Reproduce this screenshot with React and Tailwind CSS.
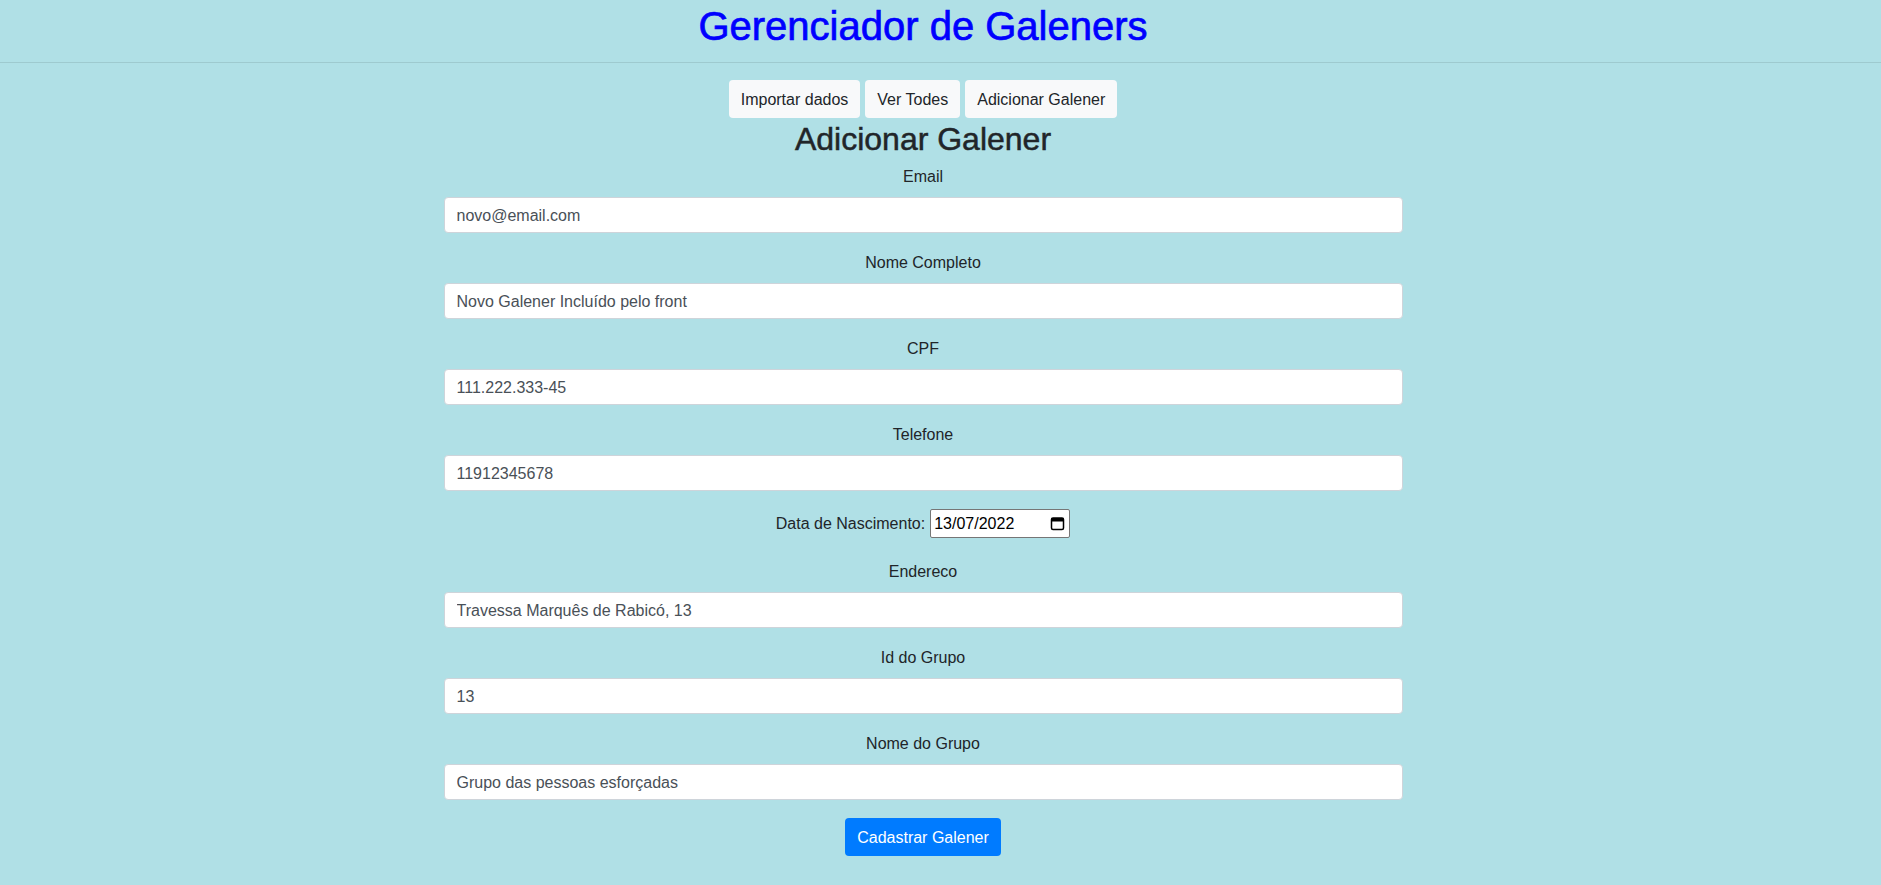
import { useState } from 'react';

const campos = [
  { id: 'email', label: 'Email', valor: 'novo@email.com' },
  { id: 'nome', label: 'Nome Completo', valor: 'Novo Galener Incluído pelo front' },
  { id: 'cpf', label: 'CPF', valor: '111.222.333-45' },
  { id: 'telefone', label: 'Telefone', valor: '11912345678' },
];

const camposGrupo = [
  { id: 'endereco', label: 'Endereco', valor: 'Travessa Marquês de Rabicó, 13' },
  { id: 'idGrupo', label: 'Id do Grupo', valor: '13' },
  { id: 'nomeGrupo', label: 'Nome do Grupo', valor: 'Grupo das pessoas esforçadas' },
];

function Campo({ id, label, valor }) {
  return (
    <div className="mb-[18px]">
      <label htmlFor={id} className="block text-center leading-6 mb-2 text-[#212529]">
        {label}
      </label>
      <input
        id={id}
        defaultValue={valor}
        className="block w-full h-9 pl-3 pr-3 pt-[2px] rounded border border-[#ced4da] bg-white text-[#495057] outline-none"
      />
    </div>
  );
}

function CalendarIcon() {
  return (
    <svg width="15" height="15" viewBox="0 0 15 15" className="shrink-0">
      <rect x="1.5" y="2" width="12" height="11.5" rx="1.5" fill="none" stroke="#000" strokeWidth="1.5" />
      <rect x="1.5" y="2" width="12" height="3.5" fill="#000" />
    </svg>
  );
}

export default function App() {
  const [aba, setAba] = useState('adicionar');

  return (
    <div className="min-h-screen bg-[#b0e0e6] font-['Liberation_Sans',Arial,sans-serif] text-base text-[#212529]">
      <header className="h-[63px] pt-[2px] border-b border-[#9ecacf]">
        <div className="w-[1846px] text-center">
          <h1 className="text-[40px] leading-[48px] text-[#0000ff] [-webkit-text-stroke:0.7px_#0000ff]">
            Gerenciador de Galeners
          </h1>
        </div>
      </header>

      <main className="w-[1846px] flex flex-col items-center pt-[17px]">
        <nav className="flex gap-[5px]">
          {[
            ['importar', 'Importar dados'],
            ['todos', 'Ver Todes'],
            ['adicionar', 'Adicionar Galener'],
          ].map(([chave, texto]) => (
            <button
              key={chave}
              onClick={() => setAba(chave)}
              className="h-[38px] px-3 pt-[2px] rounded bg-[#f8f9fa] text-[#212529] leading-6"
            >
              {texto}
            </button>
          ))}
        </nav>

        <h2 className="text-[32px] leading-[40px] pt-[1px] mb-[6px] text-[#212529] [-webkit-text-stroke:0.5px_#212529]">
          Adicionar Galener
        </h2>

        <form className="w-[959px]" onSubmit={(e) => e.preventDefault()}>
          {campos.map((c) => (
            <Campo key={c.id} {...c} />
          ))}

          <div className="flex justify-center items-center h-[29px] mb-[22px]">
            <label htmlFor="nascimento" className="leading-6 mr-[5px]">Data de Nascimento:</label>
            <div
              id="nascimento"
              className="flex items-center justify-between w-[140px] h-[29px] pl-[3px] pr-[4px] border border-[#767676] rounded-[2px] bg-white text-black"
            >
              <span>13/07/2022</span>
              <CalendarIcon />
            </div>
          </div>

          {camposGrupo.map((c) => (
            <Campo key={c.id} {...c} />
          ))}

          <div className="flex justify-center">
            <button type="submit" className="h-[38px] px-3 pt-[2px] rounded bg-[#007bff] text-white leading-6">
              Cadastrar Galener
            </button>
          </div>
        </form>
      </main>
    </div>
  );
}
